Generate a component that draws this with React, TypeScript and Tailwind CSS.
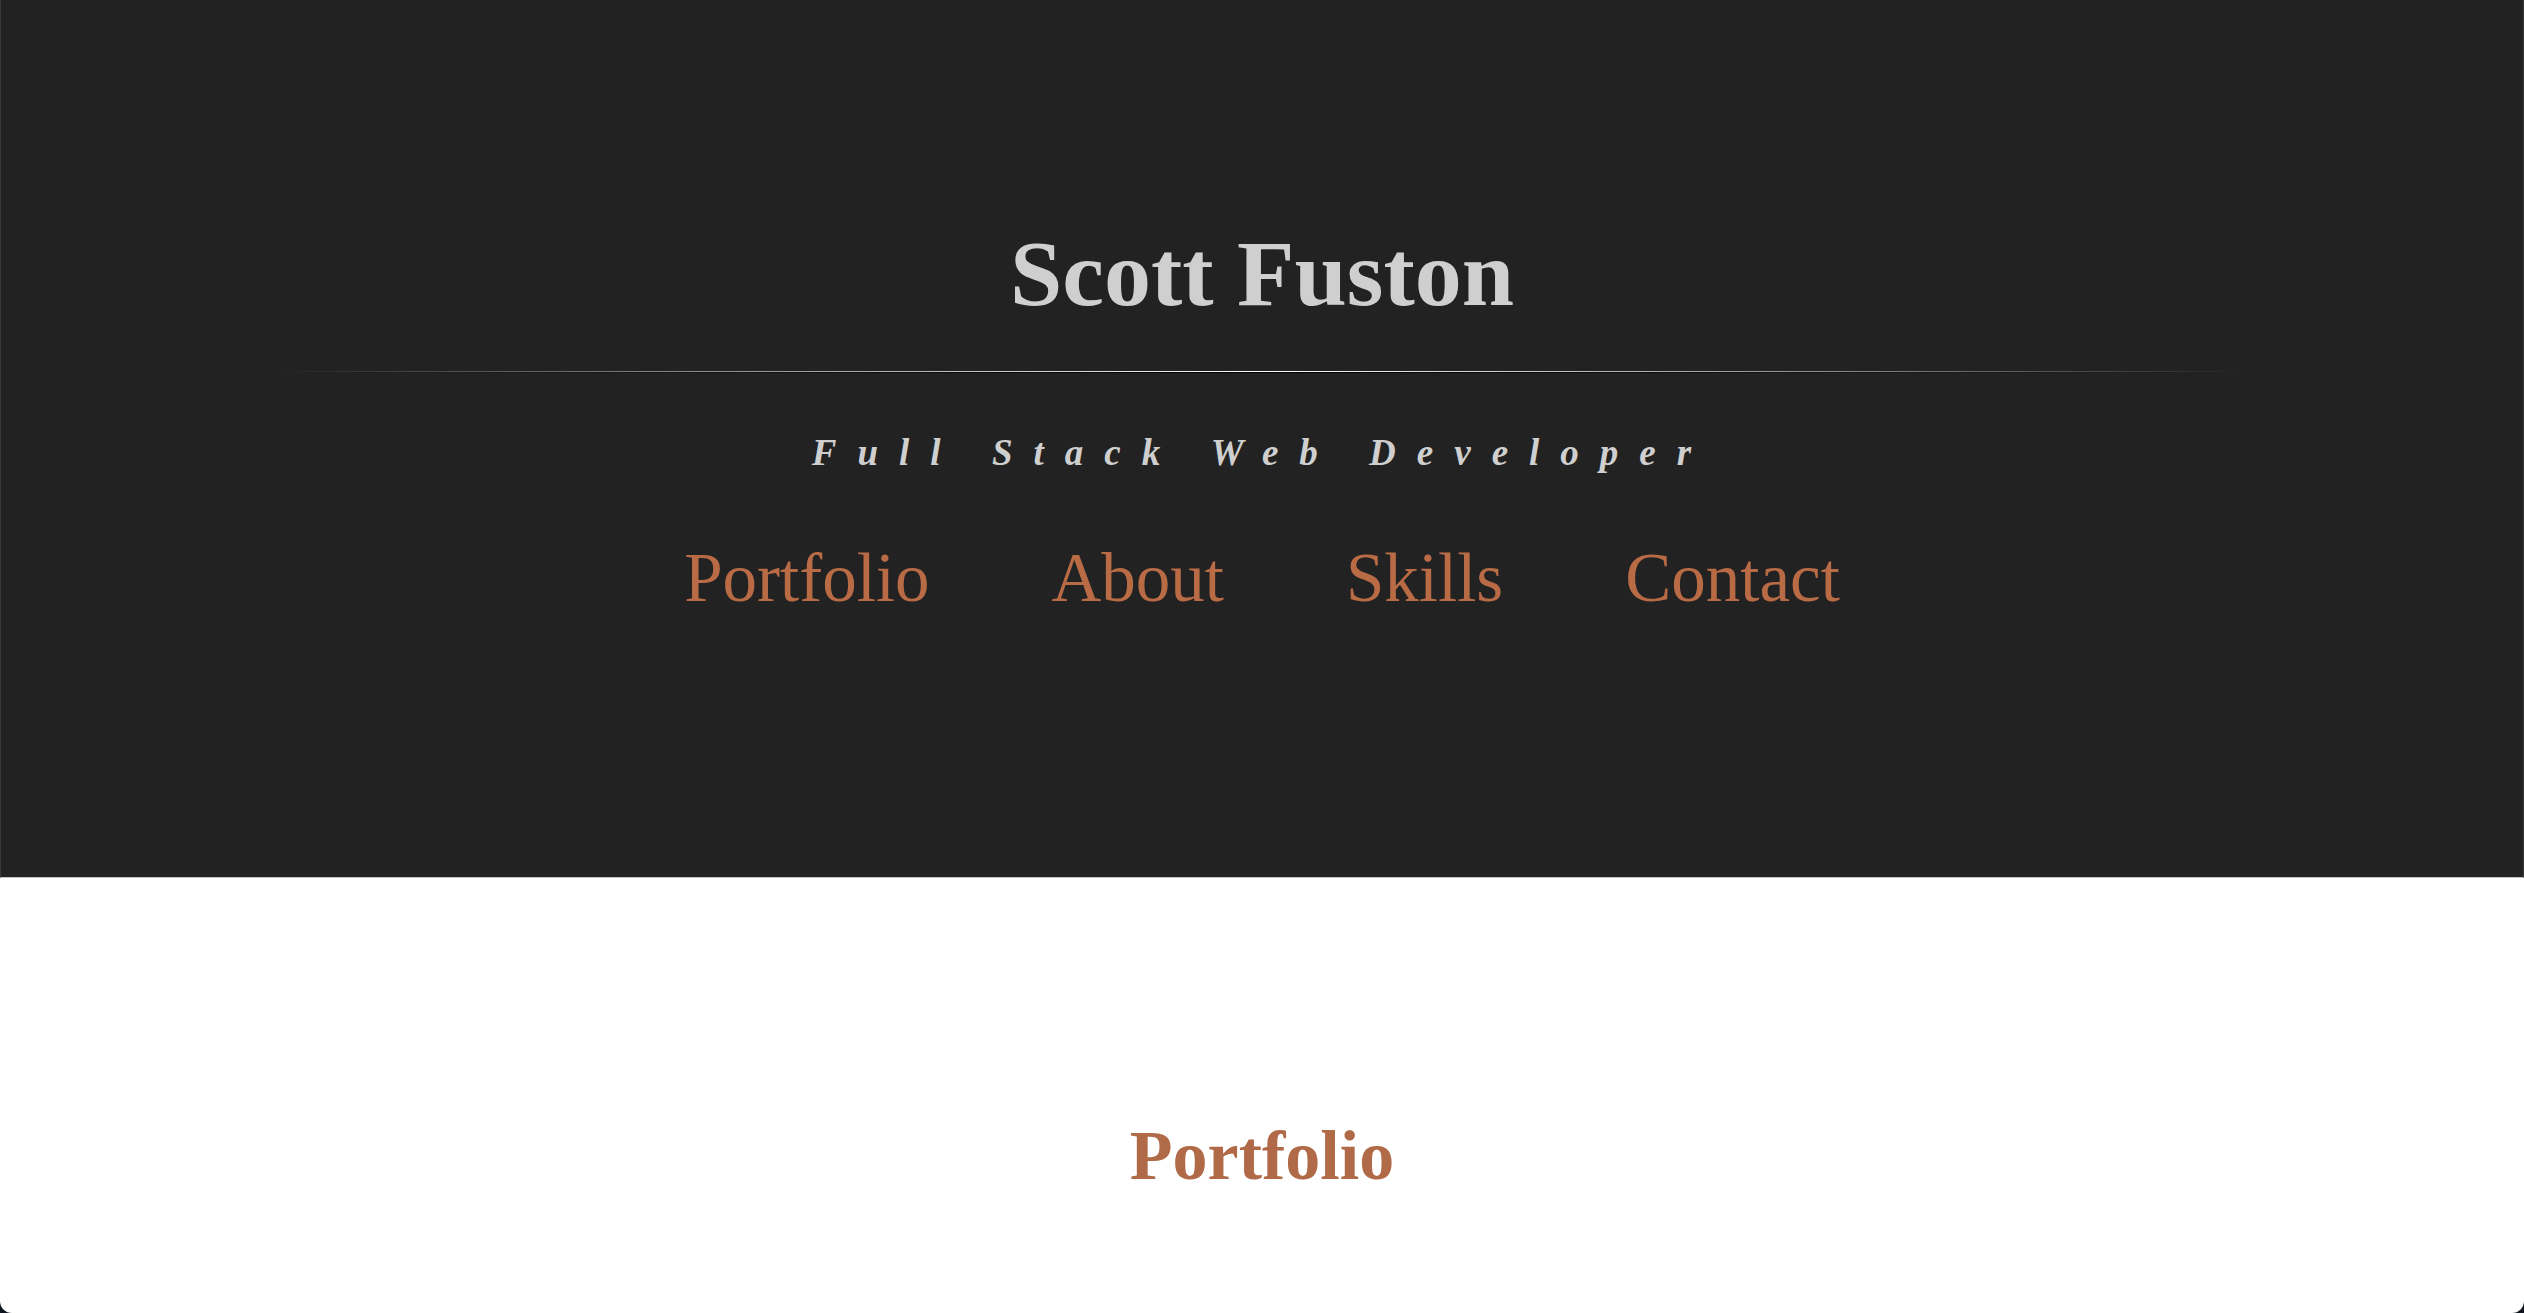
import React from "react";

const links = ["Portfolio", "About", "Skills", "Contact"];

const serif = "font-['Liberation_Serif','Times_New_Roman',Times,serif]";

export default function App() {
  return (
    <div className="min-h-screen bg-[#0f1620]">
      <div className={`min-h-[1313px] bg-white rounded-b-[12px] overflow-hidden ${serif}`}>
        <header className="h-[878px] bg-[#222222] border-x border-x-[#3a3a3a] border-b border-b-[#c4c4c4] flex flex-col items-center pt-[226px]">
          <h1 className="text-[94px] leading-none font-bold text-[#cfcfcf]">Scott Fuston</h1>
          <div className="mt-[51px] w-[78%] flex flex-col">
            <div className="h-px bg-[linear-gradient(to_right,transparent,rgba(255,255,255,0.45)_20%,#ffffff_50%,rgba(255,255,255,0.45)_80%,transparent)]" />
            <div className="h-px bg-[linear-gradient(to_right,transparent,#000000_50%,transparent)]" />
          </div>
          <p className="mt-[61px] text-[37px] leading-none font-bold italic tracking-[21px] text-[#cfcfcf]">
            Full Stack Web Developer
          </p>
          <nav className="mt-[73px] flex items-center gap-[122px]">
            {links.map((link) => (
              <a key={link} href={`#${link.toLowerCase()}`} className="text-[69px] leading-none text-[#b86b45]">
                {link}
              </a>
            ))}
          </nav>
        </header>
        <section id="portfolio" className="flex flex-col items-center pt-[243px]">
          <h2 className="text-[70px] leading-none font-bold text-[#b16a47]">Portfolio</h2>
        </section>
      </div>
    </div>
  );
}
